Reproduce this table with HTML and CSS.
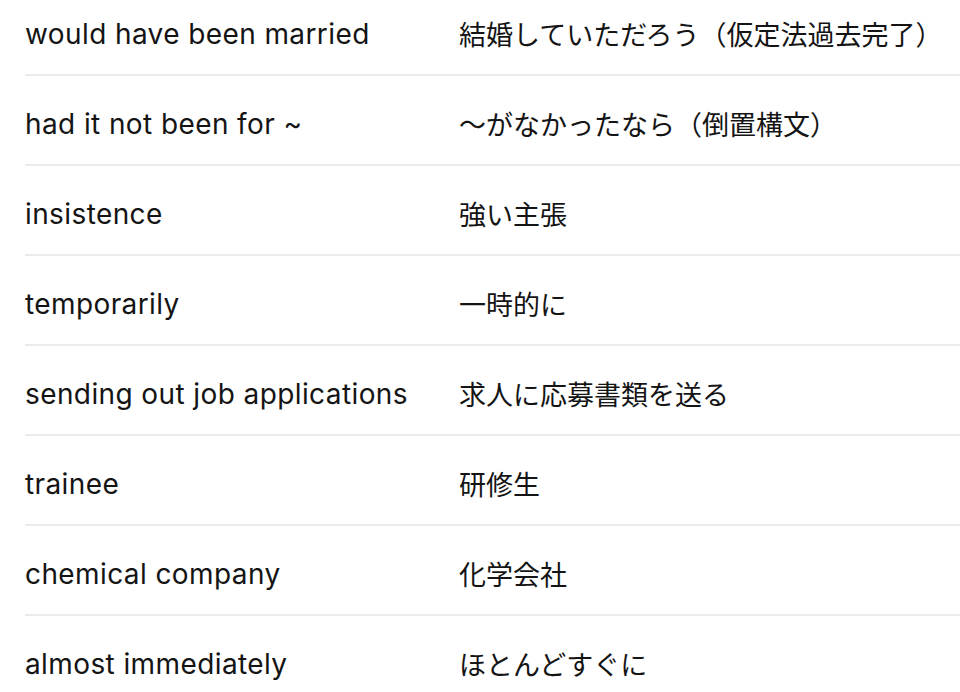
FILE: index.html
```html
<!DOCTYPE html>
<html lang="ja">
<head>
<meta charset="utf-8">
<title>Vocabulary</title>
<link rel="stylesheet" href="styles.css">
</head>
<body>
<div class="list">
  <div class="row"><div class="en">would have been married</div><div class="ja">結婚していただろう（仮定法過去完了）</div></div>
  <div class="row"><div class="en">had it not been for ~</div><div class="ja">～がなかったなら（倒置構文）</div></div>
  <div class="row"><div class="en">insistence</div><div class="ja">強い主張</div></div>
  <div class="row"><div class="en">temporarily</div><div class="ja">一時的に</div></div>
  <div class="row"><div class="en">sending out job applications</div><div class="ja">求人に応募書類を送る</div></div>
  <div class="row"><div class="en">trainee</div><div class="ja">研修生</div></div>
  <div class="row"><div class="en">chemical company</div><div class="ja">化学会社</div></div>
  <div class="row"><div class="en">almost immediately</div><div class="ja">ほとんどすぐに</div></div>
</div>
</body>
</html>
```
FILE: styles.css
```css
html, body {
  margin: 0;
  padding: 0;
  background: #ffffff;
  overflow: hidden;
}
body {
  color: #141414;
  font-family: Inter, "Noto Sans CJK JP", sans-serif;
  font-size: 27px;
}
.list {
  margin-top: -14px;
  padding-left: 25px;
}
.row {
  display: grid;
  grid-template-columns: 434px 1fr;
  align-items: center;
  box-sizing: border-box;
  height: 90px;
  padding-top: 7px;
  border-bottom: 2px solid #ebebeb;
}
.en {
  white-space: nowrap;
  font-size: 28px;
  letter-spacing: 0.4px;
}
.ja {
  white-space: nowrap;
  font-family: "Noto Sans CJK JP", sans-serif;
}
```
